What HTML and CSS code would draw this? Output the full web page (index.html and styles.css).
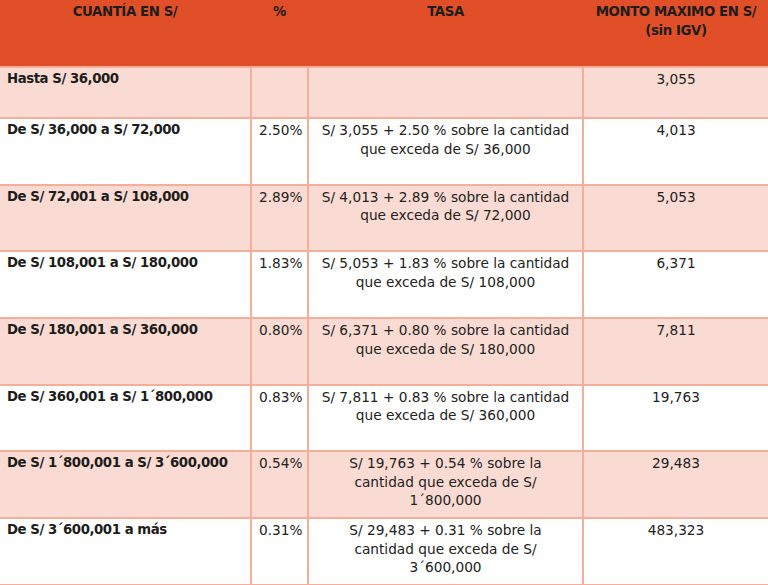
FILE: index.html
```html
<!DOCTYPE html>
<html lang="es">
<head>
<meta charset="utf-8">
<title>Tabla de tasas</title>
<link rel="stylesheet" href="styles.css">
</head>
<body>
<table class="rates">
  <colgroup>
    <col class="c-range">
    <col class="c-pct">
    <col class="c-rate">
    <col class="c-max">
  </colgroup>
  <thead>
    <tr class="head">
      <th>CUANTÍA EN S/</th>
      <th>%</th>
      <th>TASA</th>
      <th>MONTO MAXIMO EN S/<br>(sin IGV)</th>
    </tr>
  </thead>
  <tbody>
    <tr class="first shade">
      <td class="range">Hasta S/ 36,000</td>
      <td class="pct"></td>
      <td class="rate"></td>
      <td class="max">3,055</td>
    </tr>
    <tr class="row">
      <td class="range">De S/ 36,000 a S/ 72,000</td>
      <td class="pct">2.50%</td>
      <td class="rate">S/ 3,055 + 2.50 % sobre la cantidad<br>que exceda de S/ 36,000</td>
      <td class="max">4,013</td>
    </tr>
    <tr class="row shade">
      <td class="range">De S/ 72,001 a S/ 108,000</td>
      <td class="pct">2.89%</td>
      <td class="rate">S/ 4,013 + 2.89 % sobre la cantidad<br>que exceda de S/ 72,000</td>
      <td class="max">5,053</td>
    </tr>
    <tr class="row">
      <td class="range">De S/ 108,001 a S/ 180,000</td>
      <td class="pct">1.83%</td>
      <td class="rate">S/ 5,053 + 1.83 % sobre la cantidad<br>que exceda de S/ 108,000</td>
      <td class="max">6,371</td>
    </tr>
    <tr class="row shade">
      <td class="range">De S/ 180,001 a S/ 360,000</td>
      <td class="pct">0.80%</td>
      <td class="rate">S/ 6,371 + 0.80 % sobre la cantidad<br>que exceda de S/ 180,000</td>
      <td class="max">7,811</td>
    </tr>
    <tr class="row">
      <td class="range">De S/ 360,001 a S/ 1´800,000</td>
      <td class="pct">0.83%</td>
      <td class="rate">S/ 7,811 + 0.83 % sobre la cantidad<br>que exceda de S/ 360,000</td>
      <td class="max">19,763</td>
    </tr>
    <tr class="row shade">
      <td class="range">De S/ 1´800,001 a S/ 3´600,000</td>
      <td class="pct">0.54%</td>
      <td class="rate">S/ 19,763 + 0.54 % sobre la<br>cantidad que exceda de S/<br>1´800,000</td>
      <td class="max">29,483</td>
    </tr>
    <tr class="row">
      <td class="range">De S/ 3´600,001 a más</td>
      <td class="pct">0.31%</td>
      <td class="rate">S/ 29,483 + 0.31 % sobre la<br>cantidad que exceda de S/<br>3´600,000</td>
      <td class="max">483,323</td>
    </tr>
  </tbody>
</table>
</body>
</html>
```
FILE: styles.css
```css
html, body {
  margin: 0;
  padding: 0;
  background: #ffffff;
}

body {
  font-family: "DejaVu Sans", "Liberation Sans", sans-serif;
  color: #222220;
}

.rates {
  width: 768px;
  border-collapse: collapse;
  table-layout: fixed;
  font-size: 13.7px;
  line-height: 18.5px;
}

.c-range { width: 251px; }
.c-pct { width: 57px; }
.c-rate { width: 275px; }
.c-max { width: 185px; }

.rates th,
.rates td {
  vertical-align: top;
  padding: 0 7px;
  border: 2px solid #f5ae99;
}

.rates tr > :first-child { border-left: none; }
.rates tr > :last-child { border-right: none; }

.head {
  height: 67px;
  background: #e04f27;
}

.head th {
  padding-top: 3px;
  border-top: none;
  border-left-color: #e04f27;
  border-right-color: #e04f27;
  font-size: 13.3px;
  font-weight: bold;
  letter-spacing: -0.4px;
  text-align: center;
  color: #1d1d1b;
}

.first { height: 51px; }
.row { height: 66.7px; }

.shade { background: #f9dbd3; }

.rates td { padding-top: 2px; }

.range {
  font-size: 13.3px;
  font-weight: bold;
  letter-spacing: -0.45px;
  text-align: left;
  color: #1d1d1b;
}

.pct { text-align: right; }
.rate { text-align: center; }
.max { text-align: center; }
```
